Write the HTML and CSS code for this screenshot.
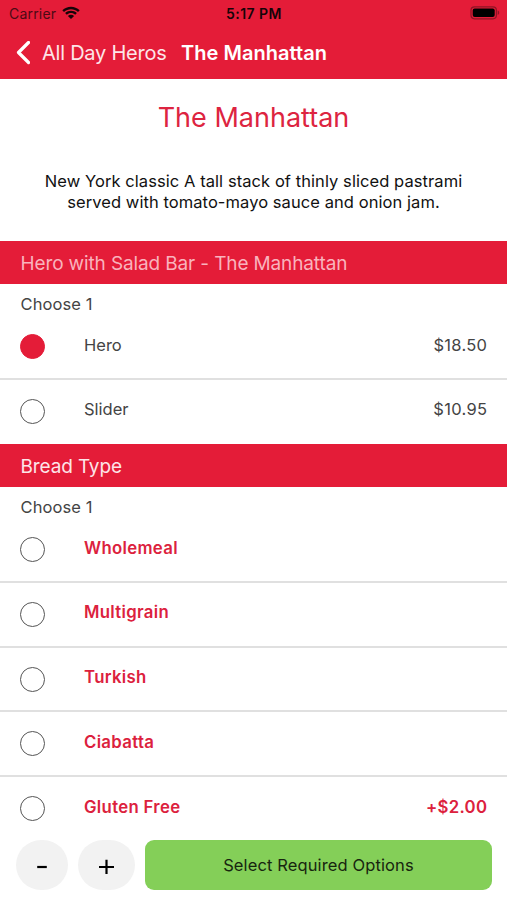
FILE: index.html
```html
<!DOCTYPE html>
<html lang="en">
<head>
<meta charset="utf-8">
<title>The Manhattan</title>
<link rel="stylesheet" href="styles.css">
</head>
<body>
<div class="screen">
  <header class="top">
    <div class="status">
      <div class="carrier"><span class="carrier-name">Carrier</span>
        <svg class="wifi" viewBox="0 0 18 13" width="18" height="13"><path d="M.3 4.3C5.1-.5 12.9-.5 17.7 4.3L16 6C12.1 2.2 5.9 2.2 2 6ZM3.1 7.1c3.3-3.2 8.5-3.2 11.8 0l-1.7 1.7c-2.4-2.3-6-2.3-8.4 0ZM5.9 9.9c1.7-1.6 4.5-1.6 6.2 0L9 13Z"/></svg>
      </div>
      <span class="time">5:17 PM</span>
      <svg class="battery" viewBox="0 0 30 14" width="30" height="14"><rect x="1" y=".8" width="25.4" height="12" rx="3.5" class="battery-case"/><rect x="2.7" y="2.5" width="22" height="8.6" rx="2" /><path d="M27.7 4.6c2 .5 2 3.9 0 4.4Z" class="battery-tip"/></svg>
    </div>
    <nav class="nav">
      <svg class="back" viewBox="0 0 14 24" width="14" height="24"><path d="M12.5 1.5 2.5 11.5 12.5 21.5"/></svg>
      <span class="parent">All Day Heros</span>
      <span class="current">The Manhattan</span>
    </nav>
  </header>
  <main>
    <section class="intro">
      <h1>The Manhattan</h1>
      <p>New York classic A tall stack of thinly sliced pastrami<br>served with tomato-mayo sauce and onion jam.</p>
    </section>
    <section class="choices">
      <h2 class="muted">Hero with Salad Bar - The Manhattan</h2>
      <div class="hint">Choose 1</div>
      <div class="row"><i class="radio selected"></i><span class="name">Hero</span><span class="price">$18.50</span></div>
      <div class="row last"><i class="radio"></i><span class="name">Slider</span><span class="price">$10.95</span></div>
    </section>
    <section class="choices required">
      <h2>Bread Type</h2>
      <div class="hint">Choose 1</div>
      <div class="row"><i class="radio"></i><span class="name">Wholemeal</span></div>
      <div class="row"><i class="radio"></i><span class="name">Multigrain</span></div>
      <div class="row"><i class="radio"></i><span class="name">Turkish</span></div>
      <div class="row"><i class="radio"></i><span class="name">Ciabatta</span></div>
      <div class="row"><i class="radio"></i><span class="name">Gluten Free</span><span class="price">+$2.00</span></div>
    </section>
  </main>
  <footer class="bar">
    <button class="step minus" aria-label="Decrease"><svg viewBox="0 0 16 16" width="16" height="16"><path d="M3.2 10h9.6"/></svg></button>
    <button class="step plus" aria-label="Increase"><svg viewBox="0 0 16 16" width="16" height="16"><path d="M0 10h15M7.5 2.7v14.3"/></svg></button>
    <button class="submit">Select Required Options</button>
  </footer>
</div>
</body>
</html>
```
FILE: styles.css
```css
* { box-sizing: border-box; }
body { margin: 0; background: #fff; font-family: Inter, "Liberation Sans", sans-serif; }
.screen { position: relative; width: 507px; height: 900px; overflow: hidden; }
.top { height: 79px; background: #e41c38; }
.status { height: 27px; display: grid; grid-template-columns: 1fr auto 1fr; align-items: center; padding: 0 7px 0 9px; font-size: 13.5px; color: #160408; }
.carrier { display: flex; align-items: center; gap: 6px; }
.carrier-name { color: #4c0a14; font-size: 14px; letter-spacing: .2px; }
.wifi { fill: #160408; margin-top: -2px; }
.time { margin-left: -1px; font-size: 14px; font-weight: 600; letter-spacing: .45px; }
.battery { justify-self: end; margin-top: -1px; }
.battery-case { fill: none; stroke: #8e1425; stroke-width: 1.2; }
.battery-tip { fill: #8e1425; }
.nav { height: 51px; display: flex; align-items: center; padding-left: 16px; color: #fff; font-size: 20px; }
.back { fill: none; stroke: #fff; stroke-width: 3.2; stroke-linecap: round; stroke-linejoin: round; }
.parent { margin-left: 12px; color: #fde5e8; letter-spacing: -.24px; }
.current { margin-left: 14.5px; font-weight: 600; letter-spacing: .03px; }
.intro { height: 162px; text-align: center; }
h1 { margin: 0; padding-top: 20px; line-height: 37px; font-size: 27px; font-weight: 400; color: #dd2440; }
.intro p { margin: 35px 0 0; font-size: 16.5px; letter-spacing: .07px; line-height: 21px; color: #111; }
h2 { margin: 0; height: 43px; padding: 1px 0 0 20.5px; display: flex; align-items: center; background: #e41c38; color: #fde5e8; font-size: 19px; letter-spacing: -.13px; font-weight: 400; }
.muted { color: #f9b3bd; }
.hint { height: 31px; padding: 10px 20.5px 0; line-height: 21px; font-size: 16.5px; letter-spacing: .1px; color: #444; }
.row { height: 64.75px; display: flex; align-items: center; padding: 0 20px; border-bottom: 2px solid #e0e0e0; font-size: 16.5px; color: #444; }
.row.last { height: 64.25px; border-bottom-color: transparent; }
.radio { width: 25px; height: 25px; border: 1.5px solid #555; border-radius: 50%; margin-top: .5px; }
.radio.selected { background: #e41c38; border-color: #e41c38; }
.name { margin: -3.5px 0 0 39px; }
.price { margin: -3.5px -.3px 0 auto; letter-spacing: .3px; }
.required .row { font-size: 16.75px; font-weight: 600; color: #dc213d; }
.required .name { letter-spacing: .32px; }
.bar { position: absolute; left: 0; right: 0; bottom: 0; height: 68px; padding: 8px 15px 0 16px; display: flex; background: #fff; }
button { border: 0; padding: 0; font: inherit; }
.step { height: 50px; border-radius: 26px; background: #f2f2f2; display: flex; align-items: center; justify-content: center; }
.step svg { fill: none; stroke: #000; stroke-width: 2.2; overflow: visible; }
.minus { width: 52px; }
.plus { width: 57px; margin-left: 10px; }
.submit { flex: 1; height: 50px; margin-left: 10px; border-radius: 9px; background: #84cf58; color: #17250f; font-size: 16.5px; letter-spacing: .12px; }
```
